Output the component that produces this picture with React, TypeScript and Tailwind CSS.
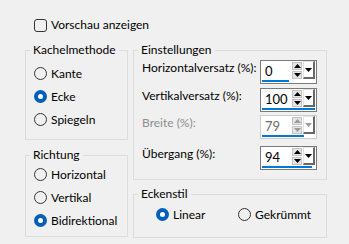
import React from "react";

function Radio({ label, checked = false }: { label: string; checked?: boolean }) {
  return (
    <div className="flex items-center h-[23px]">
      {checked ? (
        <div className="w-[13px] h-[13px] rounded-full bg-[#005fb8] flex items-center justify-center">
          <div className="w-[5px] h-[5px] rounded-full bg-white" />
        </div>
      ) : (
        <div className="w-[13px] h-[13px] rounded-full border border-[#333333]" />
      )}
      <span className="ml-[4px] leading-[16px] whitespace-nowrap">{label}</span>
    </div>
  );
}

function Group({
  title,
  className = "",
  children,
}: {
  title: string;
  className?: string;
  children: React.ReactNode;
}) {
  return (
    <fieldset className={`border border-[#dcdcdc] pl-[8px] ${className}`}>
      <legend className="ml-[-4px] px-[3px] leading-[16px]">{title}</legend>
      {children}
    </fieldset>
  );
}

function Arrow({ up = false, disabled = false }: { up?: boolean; disabled?: boolean }) {
  return (
    <svg width="7" height="4" viewBox="0 0 7 4">
      <path d={up ? "M0 4 L3.5 0 L7 4 Z" : "M0 0 L7 0 L3.5 4 Z"} fill={disabled ? "#9a9a9a" : "#000"} />
    </svg>
  );
}

function SpinBox({ value, pct, disabled = false }: { value: string; pct: number; disabled?: boolean }) {
  return (
    <div
      className={`shrink-0 w-[57px] h-[24px] border bg-white p-[1px] flex flex-col ${
        disabled ? "border-[#cccccc]" : "border-[#7a7a7a]"
      }`}
    >
      <div className="flex h-[17px]">
        <div className={`w-[30px] pl-[3px] flex items-center leading-[16px] text-[13px] ${disabled ? "text-[#6d6d6d]" : ""}`}>
          {value}
        </div>
        <div className="w-[10px] flex flex-col gap-[1px]">
          <div className="h-[8px] bg-[#e5e5e5] border border-[#c4c4c4] flex items-center justify-center">
            <Arrow up disabled={disabled} />
          </div>
          <div className="h-[8px] bg-[#e5e5e5] border border-[#c4c4c4] flex items-center justify-center">
            <Arrow disabled={disabled} />
          </div>
        </div>
        <div className="ml-[1px] w-[12px] h-[18px] -mt-[1px] bg-[#fdfdfd] border-l border-t border-[#e3e3e3] border-r-2 border-b-2 border-r-[#696969] border-b-[#696969] flex items-center justify-center">
          <Arrow disabled={disabled} />
        </div>
      </div>
      <div className="h-[3px] mt-[1px] bg-[#0078d7]" style={{ width: `${Math.round(53 * pct)}px` }} />
    </div>
  );
}

function Row({ label, className = "", disabled = false, children }: { label: string; className?: string; disabled?: boolean; children: React.ReactNode }) {
  return (
    <div className={`flex items-start pr-[9px] ${className}`}>
      <div className={`flex-1 text-left leading-[16px] whitespace-nowrap ${disabled ? "text-[#8d8d8d]" : ""}`}>{label}</div>
      {children}
    </div>
  );
}

export default function App() {
  return (
    <div className="w-[349px] h-[244px] bg-[#f0f0f0] text-black text-[12px] font-['Lato',sans-serif] pt-[17px] overflow-hidden">
      <div className="flex items-center h-[16px] pl-[34px]">
        <div className="w-[13px] h-[13px] rounded-[3px] border border-[#333333]" />
        <span className="ml-[4px] leading-[16px]">Vorschau anzeigen</span>
      </div>

      <div className="flex items-start gap-[5px] pl-[25px] mt-[9px]">
        {/* Left column */}
        <div className="w-[103px] flex flex-col">
          <Group title="Kachelmethode" className="pt-[4px] pb-[8px]">
            <Radio label="Kante" />
            <Radio label="Ecke" checked />
            <Radio label="Spiegeln" />
          </Group>
          <Group title="Richtung" className="mt-[7px] pb-[4px]">
            <Radio label="Horizontal" />
            <Radio label="Vertikal" />
            <Radio label="Bidirektional" checked />
          </Group>
        </div>

        {/* Right column */}
        <div className="w-[194px] flex flex-col">
          <Group title="Einstellungen" className="pt-[2px] pb-[9px]">
            <Row label="Horizontalversatz (%):">
              <SpinBox value="0" pct={0.5} />
            </Row>
            <Row label="Vertikalversatz (%):" className="mt-[4px]">
              <SpinBox value="100" pct={1} />
            </Row>
            <Row label="Breite (%):" className="mt-[3px]" disabled>
              <SpinBox value="79" pct={0.79} disabled />
            </Row>
            <Row label="Übergang (%):" className="mt-[7px]">
              <SpinBox value="94" pct={0.94} />
            </Row>
          </Group>
          <Group title="Eckenstil" className="mt-[6px] pt-[1px] pb-[11px]">
            <div className="flex pl-[14px]">
              <div className="w-[82px]">
                <Radio label="Linear" checked />
              </div>
              <Radio label="Gekrümmt" />
            </div>
          </Group>
        </div>
      </div>
    </div>
  );
}
